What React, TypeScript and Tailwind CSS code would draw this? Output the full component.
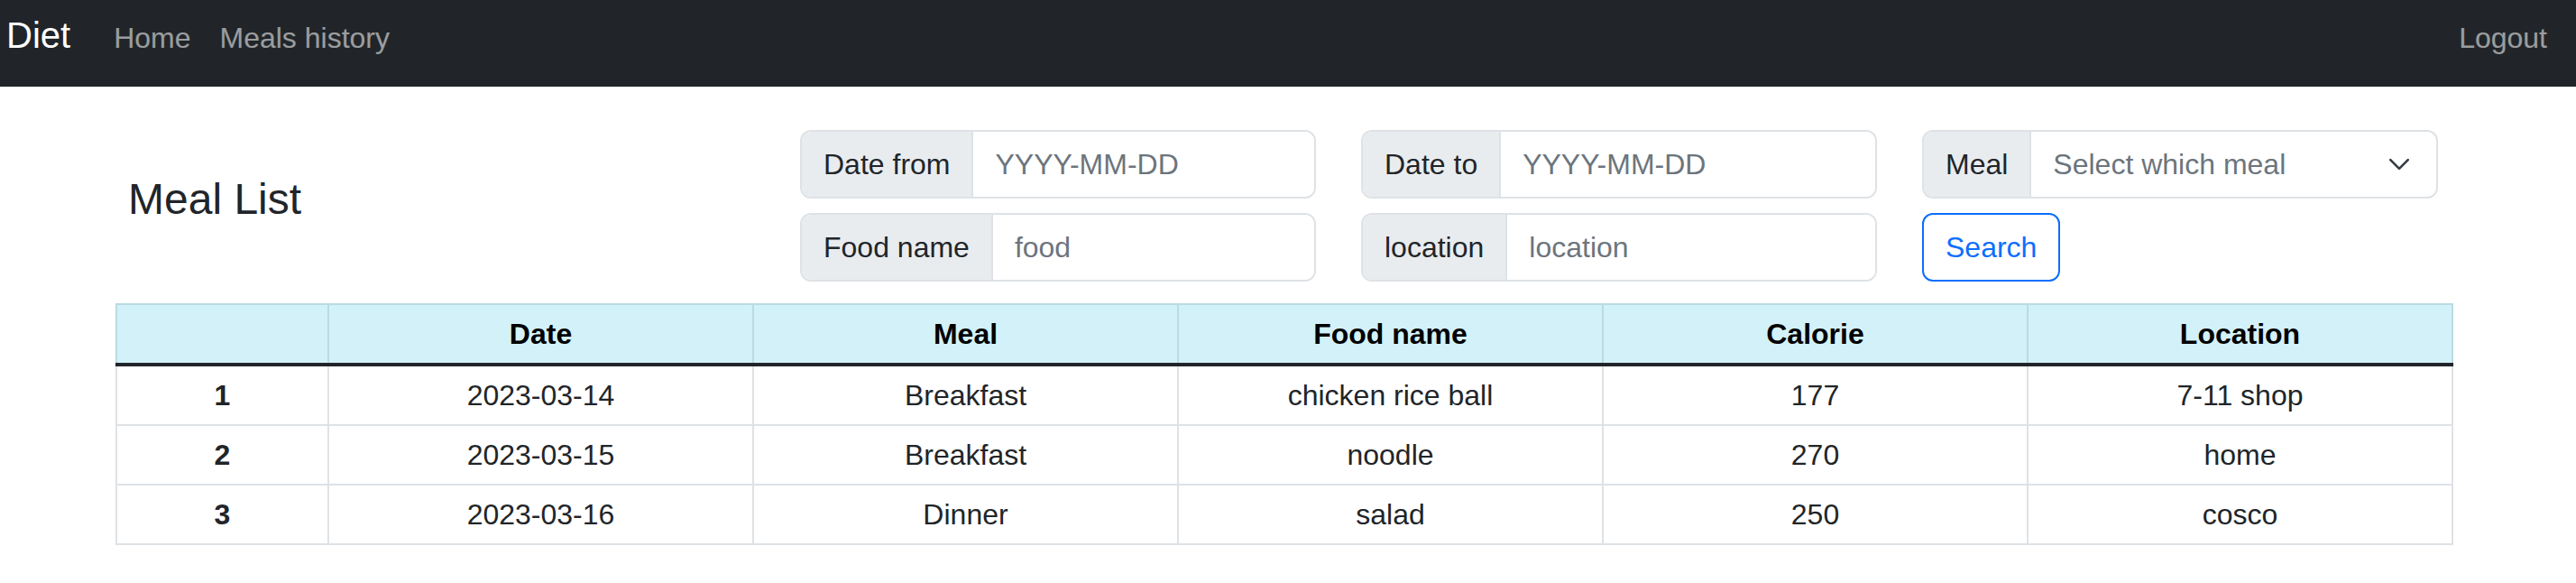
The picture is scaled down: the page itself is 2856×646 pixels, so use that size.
const meals = [
  { id: 1, date: "2023-03-14", meal: "Breakfast", food: "chicken rice ball", calorie: 177, location: "7-11 shop" },
  { id: 2, date: "2023-03-15", meal: "Breakfast", food: "noodle", calorie: 270, location: "home" },
  { id: 3, date: "2023-03-16", meal: "Dinner", food: "salad", calorie: 250, location: "cosco" },
];

const InputGroup = ({ label, placeholder }: { label: string; placeholder: string }) => {
  return (
    <div className="flex h-[76px] overflow-hidden rounded-[12px] border-2 border-[#dee2e6] bg-white">
      <span className="flex items-center whitespace-nowrap border-r-2 border-[#dee2e6] bg-[#e9ecef] px-[24px] text-[32px] leading-[48px] text-[#212529]">
        {label}
      </span>
      <input
        placeholder={placeholder}
        className="min-w-0 flex-1 bg-white px-[24px] text-[32px] leading-[48px] text-[#212529] outline-none placeholder:text-[#6c757d]"
      />
    </div>
  );
};

const App = () => {
  return (
    <div className="min-h-[646px] bg-white font-['Liberation_Sans',Arial,sans-serif] text-[#212529]">
      {/* navbar */}
      <nav className="flex h-[96px] items-baseline justify-between bg-[#212529] pl-[7px] pr-[16px] pt-[15px]">
        <div className="flex items-baseline">
          <a className="mr-[32px] text-[40px] leading-[48px] text-white">Diet</a>
          <a className="px-[16px] text-[32px] leading-[48px] text-white/55">Home</a>
          <a className="px-[16px] text-[32px] leading-[48px] text-white/55">Meals history</a>
        </div>
        <a className="px-[16px] text-[32px] leading-[48px] text-white/55">Logout</a>
      </nav>

      <main className="ml-[128px] w-[2592px] pt-[48px]">
        <div className="flex">
          <div className="w-[759px] pl-[14px]">
            <h3 className="mt-[48px] text-[48px] font-medium leading-[58px] text-[#212529]">Meal List</h3>
          </div>
          <div className="grid grid-cols-[572px_572px_572px] gap-x-[50px] gap-y-[16px]">
            <InputGroup label="Date from" placeholder="YYYY-MM-DD" />
            <InputGroup label="Date to" placeholder="YYYY-MM-DD" />
            <div className="flex h-[76px] overflow-hidden rounded-[12px] border-2 border-[#dee2e6] bg-white">
              <span className="flex items-center border-r-2 border-[#dee2e6] bg-[#e9ecef] px-[24px] text-[32px] leading-[48px]">
                Meal
              </span>
              <div className="flex flex-1 items-center justify-between pl-[24px] pr-[28px]">
                <span className="text-[32px] leading-[48px] text-[#6c757d]">Select which meal</span>
                <svg width="26" height="26" viewBox="0 0 16 16" fill="none">
                  <path d="M2 5l6 6 6-6" stroke="#343a40" strokeWidth="1.6" strokeLinecap="round" strokeLinejoin="round" />
                </svg>
              </div>
            </div>
            <InputGroup label="Food name" placeholder="food" />
            <InputGroup label="location" placeholder="location" />
            <div>
              <button className="h-[76px] rounded-[12px] border-2 border-[#0d6efd] bg-white px-[24px] text-[32px] leading-[48px] text-[#0d6efd]">
                Search
              </button>
            </div>
          </div>
        </div>

        <table className="mt-[24px] w-full table-fixed border-collapse text-center text-[32px] leading-[48px]">
          <colgroup>
            <col className="w-[235px]" />
            <col />
            <col />
            <col />
            <col />
            <col />
          </colgroup>
          <thead>
            <tr>
              {["", "Date", "Meal", "Food name", "Calorie", "Location"].map((h, i) => (
                <th key={i} className="border-2 border-[#badce3] bg-[#d3f1f9] px-[8px] py-[8px] font-bold text-black">
                  {h}
                </th>
              ))}
            </tr>
          </thead>
          <tbody>
            {meals.map((m, i) => {
              const cell =
                "border-2 border-[#dee2e6] px-[8px] py-[8px] " + (i === 0 ? "border-t-4 border-t-[#212529]" : "");
              return (
                <tr key={m.id}>
                  <th className={cell + " font-bold"}>{m.id}</th>
                  <td className={cell}>{m.date}</td>
                  <td className={cell}>{m.meal}</td>
                  <td className={cell}>{m.food}</td>
                  <td className={cell}>{m.calorie}</td>
                  <td className={cell}>{m.location}</td>
                </tr>
              );
            })}
          </tbody>
        </table>
      </main>
    </div>
  );
};

export default App;
